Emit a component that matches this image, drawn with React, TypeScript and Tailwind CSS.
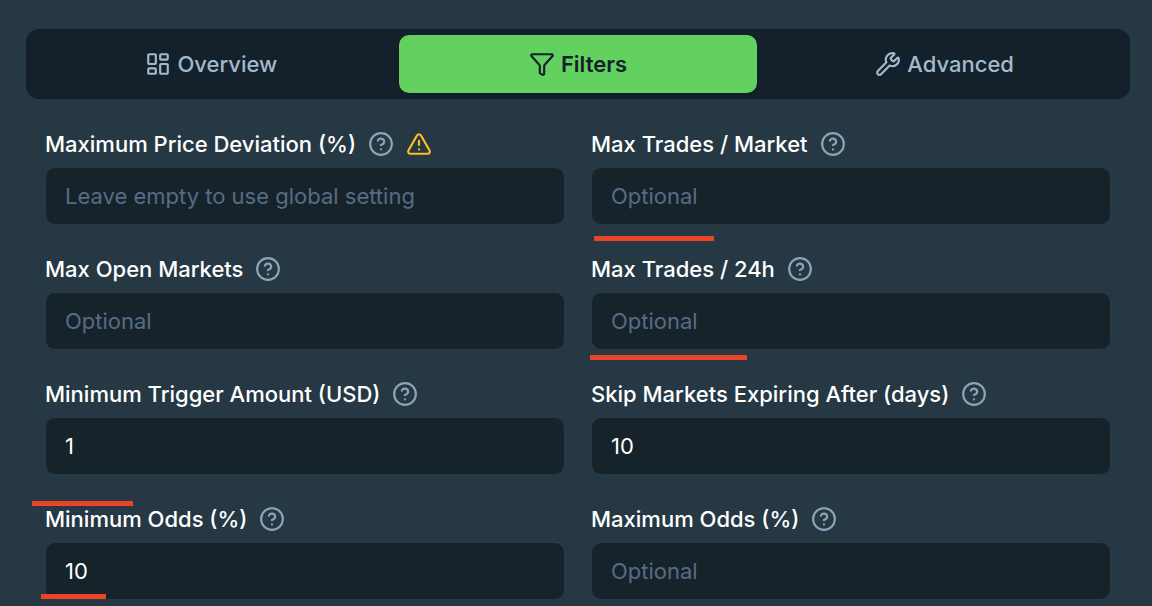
import React from 'react';
import { CircleHelp, Funnel, LayoutDashboard, TriangleAlert, Wrench } from 'lucide-react';

interface Field {
  id: string;
  label: string;
  placeholder: string;
  value?: string;
  warning?: boolean;
  marks?: string[];
}

const tabs = [
  { id: 'overview', name: 'Overview', icon: LayoutDashboard },
  { id: 'filters', name: 'Filters', icon: Funnel },
  { id: 'advanced', name: 'Advanced', icon: Wrench },
];

// marks are the red underlines drawn over a field
const fields: Field[] = [
  {
    id: 'max-price-deviation',
    label: 'Maximum Price Deviation (%)',
    placeholder: 'Leave empty to use global setting',
    warning: true,
  },
  {
    id: 'max-trades-market',
    label: 'Max Trades / Market',
    placeholder: 'Optional',
    marks: ['left-[3px] top-[111px] w-[120px]'],
  },
  { id: 'max-open-markets', label: 'Max Open Markets', placeholder: 'Optional' },
  {
    id: 'max-trades-24h',
    label: 'Max Trades / 24h',
    placeholder: 'Optional',
    marks: ['-left-px top-[105px] w-[157px]'],
  },
  { id: 'min-trigger', label: 'Minimum Trigger Amount (USD)', placeholder: 'Optional', value: '1' },
  { id: 'skip-expiring', label: 'Skip Markets Expiring After (days)', placeholder: 'Optional', value: '10' },
  {
    id: 'min-odds',
    label: 'Minimum Odds (%)',
    placeholder: 'Optional',
    value: '10',
    marks: ['-left-[13px] top-px w-[101px]', '-left-1 top-[94px] w-[65px]'],
  },
  { id: 'max-odds', label: 'Maximum Odds (%)', placeholder: 'Optional' },
];

function FilterField({ field }: { field: Field }) {
  return (
    <div className="relative">
      <div className="mb-1 flex h-[38px] items-center">
        <label htmlFor={field.id} className="whitespace-nowrap text-[22px] font-medium text-white">
          {field.label}
        </label>
        <button type="button" aria-label={`About ${field.label}`} className="ml-3 text-[#8ba4b8]">
          <CircleHelp className="size-[26px]" />
        </button>
        {field.warning && (
          <TriangleAlert className="ml-3 size-[26px] text-[#fbbf24]" aria-hidden="true" />
        )}
      </div>
      <input
        id={field.id}
        type="text"
        defaultValue={field.value}
        placeholder={field.placeholder}
        className="block h-[58px] w-full rounded-[10px] border border-[#2c3a44] bg-[#17232b] px-[19px] text-[22px] text-white placeholder:text-[#576c84] focus:outline-none"
      />
      {field.marks?.map((mark) => (
        <span key={mark} className={`absolute h-[5px] bg-[#ee4426] ${mark}`} aria-hidden="true" />
      ))}
    </div>
  );
}

export default function App() {
  return (
    <main className="min-h-screen bg-[#253843] pt-[29px] pr-[22px] pl-[26px] font-['Inter','Liberation_Sans',sans-serif]">
      <div role="tablist" className="grid grid-cols-3 gap-2 rounded-[13px] bg-[#14212b] p-1.5">
        {tabs.map(({ id, name, icon: Icon }) => (
          <button
            key={id}
            type="button"
            role="tab"
            aria-selected={id === 'filters'}
            className={`flex h-[58px] items-center justify-center gap-1.5 rounded-[10px] text-[22px] ${
              id === 'filters'
                ? 'bg-[#62d160] font-semibold text-[#14212b] shadow-sm'
                : 'font-medium text-[#a3bacc]'
            }`}
          >
            <Icon className="size-[26px]" />
            {name}
          </button>
        ))}
      </div>
      <div className="grid grid-cols-2 gap-x-[26px] gap-y-[25px] px-[19px] pt-[26px]">
        {fields.map((field) => (
          <FilterField key={field.id} field={field} />
        ))}
      </div>
    </main>
  );
}
